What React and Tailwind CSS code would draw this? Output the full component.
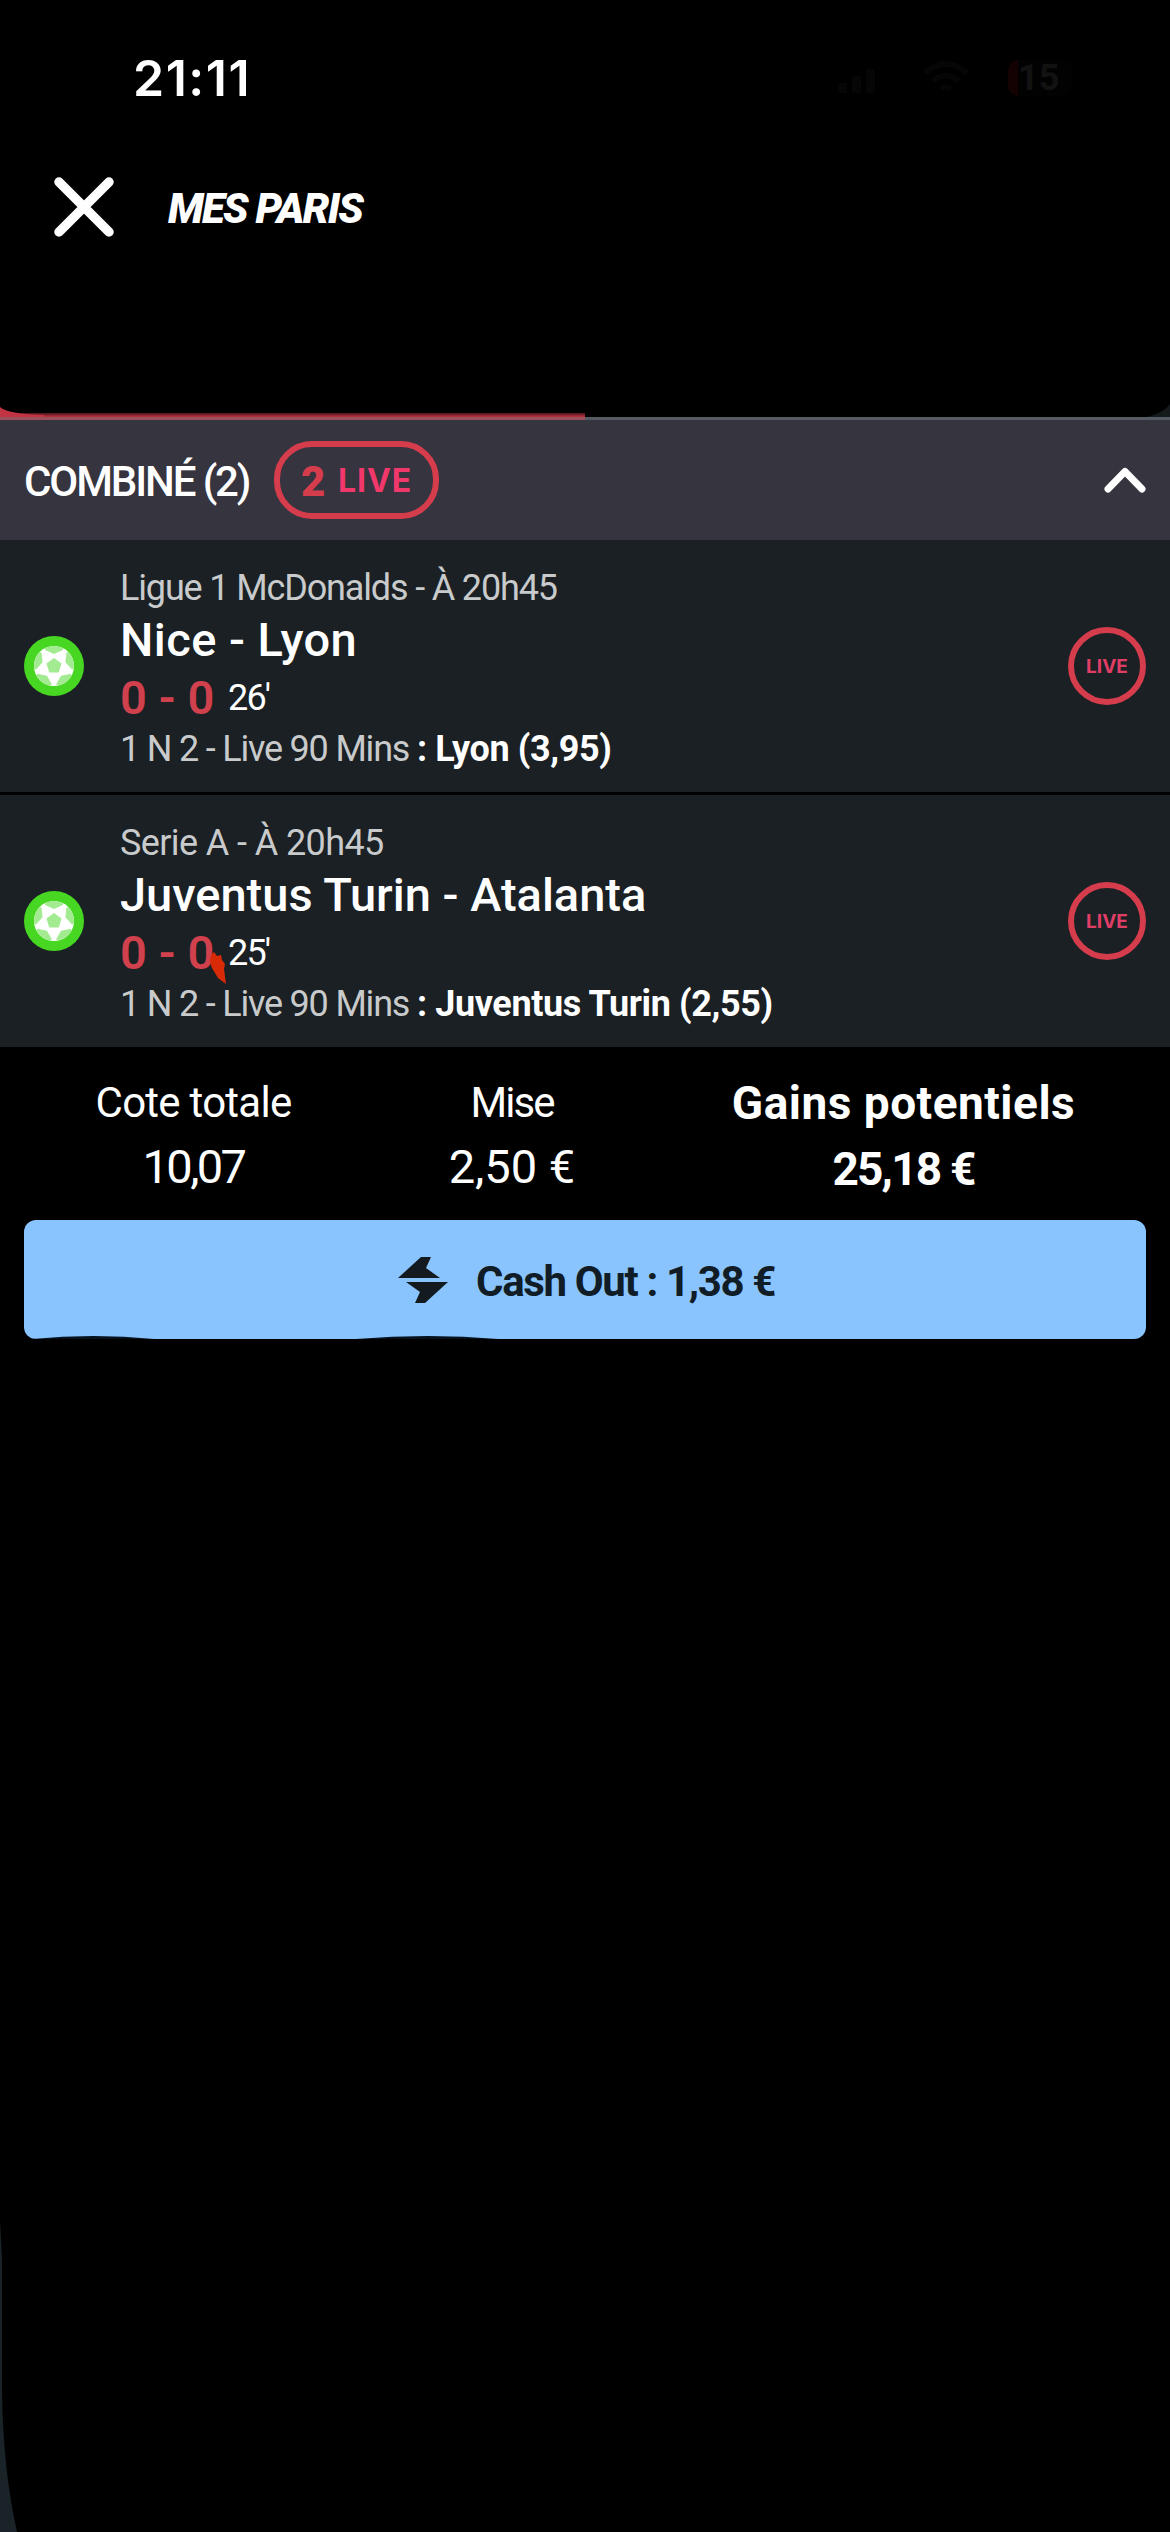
import React from 'react'

const BETS = [
  {
    id: 'nice-lyon',
    league: 'Ligue 1 McDonalds - À 20h45',
    leagueTracking: 'tracking-[-1.15px]',
    teams: 'Nice - Lyon',
    teamsTracking: 'tracking-[0.45px]',
    minute: "26'",
    pick: 'Lyon (3,95)',
  },
  {
    id: 'juve-atalanta',
    league: 'Serie A - À 20h45',
    leagueTracking: 'tracking-[-0.6px]',
    teams: 'Juventus Turin - Atalanta',
    teamsTracking: 'tracking-normal',
    minute: "25'",
    pick: 'Juventus Turin (2,55)',
    marker: true,
  },
]

export default function App() {
  return (
    <div className="relative w-[1170px] h-[2532px] bg-black text-white overflow-hidden font-[Roboto,sans-serif]">
      <StatusBar />
      <TopBar />
      <Progress />
      <ComboHeader />
      <div className="flex flex-col gap-[3px]">
        {BETS.map(bet => (
          <BetRow key={bet.id} bet={bet} />
        ))}
      </div>
      <Totals />
      <CashOut />
      <SheetEdge />
    </div>
  )
}

// ─── Top of the screen ────────────────────────────────────────────────────────

function StatusBar() {
  return (
    <header className="h-[156px] flex items-start justify-between pl-[133px] pr-[98px] pt-[48px]">
      <span className="font-[Inter,sans-serif] font-semibold text-[50px] leading-[60px] tracking-[1.5px]">21:11</span>
      <div className="flex items-center gap-[38px] h-[60px] text-[#060606]">
        <svg className="w-[46px] h-[30px]" viewBox="0 0 46 30" fill="currentColor">
          <rect x="0" y="20" width="9" height="10" rx="2" />
          <rect x="14" y="13" width="9" height="17" rx="2" />
          <rect x="28" y="6" width="9" height="24" rx="2" />
        </svg>
        <svg className="w-[48px] h-[36px]" viewBox="0 0 48 36" fill="none" stroke="currentColor" strokeWidth="6">
          <path d="M3 13 Q24 -5 45 13" />
          <path d="M11 21 Q24 10 37 21" />
          <path d="M19 29 Q24 25 29 29" />
        </svg>
        <span className="w-[64px] h-[36px] rounded-[10px] border-l-[10px] border-[#140102] bg-[#020202] text-[#121212] text-[36px] leading-[36px] font-bold">15</span>
      </div>
    </header>
  )
}

function TopBar() {
  return (
    <div className="h-[257px] flex items-start pl-[54px] pt-[21px]">
      <svg className="w-[60px] h-[60px]" viewBox="0 0 60 60" stroke="white" strokeWidth="9.5" strokeLinecap="round">
        <path d="M5 5 L55 55 M55 5 L5 55" />
      </svg>
      <h1 className="ml-[54px] mt-[8px] text-[42px] leading-[48px] font-black italic tracking-[-1.7px] whitespace-nowrap">
        MES PARIS
      </h1>
    </div>
  )
}

function Progress() {
  return (
    <div className="relative h-[7px] flex flex-col">
      <div className="w-[585px] h-[4px] bg-linear-to-b from-[#4d1219] to-[#c03443]" />
      <div className="h-[3px] flex">
        <div className="w-[585px] bg-[#9b505a]" />
        <div className="flex-1 bg-[#555b64]" />
      </div>
      {/* rounded corners of the dark panel above */}
      <svg className="absolute left-0 -top-[6px] w-[44px] h-[10px]" viewBox="0 0 44 10" fill="#c03443">
        <path d="M0 0 Q8 7 44 8 V10 H0 Z" />
      </svg>
      <svg className="absolute right-0 -top-[9px] w-[24px] h-[13px]" viewBox="0 0 24 13" fill="#14191c">
        <path d="M24 0 Q18 9 0 13 H24 Z" />
      </svg>
    </div>
  )
}

function ComboHeader() {
  return (
    <div className="h-[120px] bg-[#35343f] flex items-center pl-[24px] pr-[24px]">
      <span className="w-[250px] pt-[4px] text-[42px] leading-[48px] font-medium tracking-[-2.1px] whitespace-nowrap">
        COMBINÉ (2)
      </span>
      <span className="w-[165px] h-[78px] border-[6px] border-[#d63d4c] rounded-[38px] flex items-center pl-[21px]">
        <span className="w-[37px] pt-[3px] text-[42px] leading-[48px] font-black text-[#d63d4c]">2</span>
        <span className="pt-[2px] font-[Inter,sans-serif] text-[32px] leading-[40px] font-bold tracking-[0.9px] text-[#f0386b]">LIVE</span>
      </span>
      <svg className="ml-auto w-[42px] h-[26px]" viewBox="0 0 42 26" fill="none" stroke="white" strokeWidth="7" strokeLinecap="round" strokeLinejoin="round">
        <path d="M4 22 L21 4.500 L38 22" />
      </svg>
    </div>
  )
}

// ─── Bets ─────────────────────────────────────────────────────────────────────

function BetRow({ bet }) {
  return (
    <section className="h-[252px] bg-[#1a2024] flex items-center px-[24px]">
      <Ball />
      <div className="ml-[36px] pt-[5px] flex-1 whitespace-nowrap">
        <p className={`text-[36px] leading-[46px] text-[#c8cacb] ${bet.leagueTracking}`}>{bet.league}</p>
        <h2 className={`text-[47px] leading-[58px] font-medium ${bet.teamsTracking}`}>{bet.teams}</h2>
        <div className="flex items-center h-[58px]">
          <span className="relative w-[108px] text-[47px] leading-[58px] font-semibold text-[#d0404d]">
            0 - 0
            {bet.marker && <Marker />}
          </span>
          <span className="text-[36px] tracking-[-1.8px]">{bet.minute}</span>
        </div>
        <p className="text-[36px] leading-[45px] text-[#c8cacb]">
          <span className="tracking-[-1.2px]">1 N 2 - Live 90 Mins </span>
          <b className="font-bold tracking-[-0.4px] text-white">: {bet.pick}</b>
        </p>
      </div>
      <div className="w-[78px] h-[78px] pt-[2px] rounded-full border-[6px] border-[#d63d4c] flex items-center justify-center font-[Inter,sans-serif] text-[19px] font-bold text-[#e03e66]">
        LIVE
      </div>
    </section>
  )
}

function Ball() {
  return (
    <svg className="w-[60px] h-[60px]" viewBox="0 0 60 60">
      <clipPath id="ball">
        <circle cx="30" cy="30" r="20" />
      </clipPath>
      <circle cx="30" cy="30" r="30" fill="#47d722" />
      <circle cx="30" cy="30" r="20" fill="white" />
      <g fill="#a3eb91" clipPath="url(#ball)">
        <path d="M30 22 L37.500 27.500 L34.700 36.500 H25.300 L22.500 27.500 Z" />
        {[0, 72, 144, 216, 288].map(angle => (
          <path key={angle} d="M30 18 L21 14 L22 6 H38 L39 14 Z" transform={`rotate(${angle} 30 30)`} />
        ))}
      </g>
    </svg>
  )
}

function Marker() {
  return (
    <svg className="absolute left-[90px] top-[28px] w-[16px] h-[32px]" viewBox="0 0 16 32">
      <path d="M1 3 L4 0 L7 4 L11 3 L12 8 L15 12 L14 17 L16 32 L8 26 L2 16 L0 10 Z" fill="#d92a08" />
    </svg>
  )
}

// ─── Summary ──────────────────────────────────────────────────────────────────

function Totals() {
  return (
    <div className="h-[173px] flex text-center whitespace-nowrap pt-[29px]">
      <div className="w-[387px]">
        <p className="text-[42px] leading-[54px] tracking-[-0.75px]">Cote totale</p>
        <p className="mt-[10px] text-[47px] leading-[54px] tracking-[-2.6px]">10,07</p>
      </div>
      <div className="w-[250px]">
        <p className="text-[42px] leading-[54px] tracking-[-2px]">Mise</p>
        <p className="mt-[10px] text-[47px] leading-[54px]">2,50 €</p>
      </div>
      <div className="w-[533px] font-bold text-[46px] leading-[54px]">
        <p className="tracking-[0.5px]">Gains potentiels</p>
        <p className="mt-[12px] tracking-[-1.8px]">25,18 €</p>
      </div>
    </div>
  )
}

function CashOut() {
  return (
    <button className="relative mx-[24px] w-[1122px] h-[119px] rounded-[12px] bg-[#89c4ff] flex items-center pl-[374px] text-[#101c26]">
      <svg className="w-[50px] h-[46px]" viewBox="0 0 50 46" fill="#141b20">
        <path d="M23 0 H33 L28 11 L42 21 H0 Z" />
        <path d="M8 25 H50 L27 46 H17 L22 35 Z" />
      </svg>
      <span className="ml-[28px] pt-[5px] text-[42px] leading-[48px] font-bold tracking-[-1.35px] whitespace-nowrap">Cash Out : 1,38 €</span>
      {/* dark smudges along the bottom edge */}
      <svg className="absolute left-0 bottom-0 w-[500px] h-[3px]" viewBox="0 0 500 3" fill="#06121d">
        <path d="M8 3 Q70 -3 130 3 Z" />
        <path d="M332 3 Q405 -3 474 3 Z" />
      </svg>
    </button>
  )
}

// Rounded lower-left edge of the black sheet
function SheetEdge() {
  return (
    <svg className="absolute left-0 bottom-0 w-[20px] h-[332px]" viewBox="0 0 20 332" fill="#1a2327">
      <path d="M0 20 L2 60 V190 Q3 270 17 332 H0 Z" />
    </svg>
  )
}
